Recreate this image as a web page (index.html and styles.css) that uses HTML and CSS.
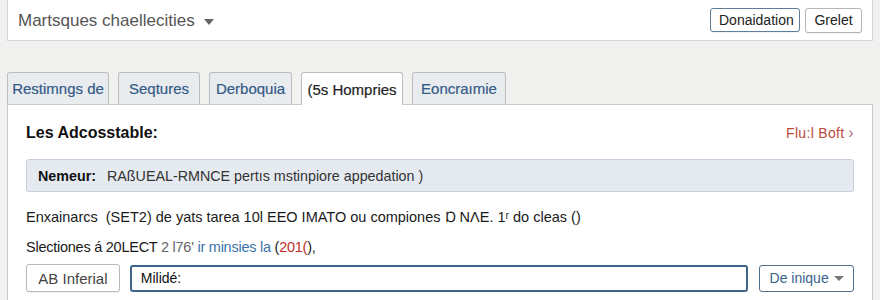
FILE: index.html
```html
<!DOCTYPE html>
<html>
<head>
<meta charset="utf-8">
<link rel="stylesheet" href="styles.css">
</head>
<body>
<div class="page">
  <header class="topbar">
    <div class="title">Martsques chaellecities <span class="caret"></span></div>
    <div class="actions">
      <button class="btn btn-primary">Donaidation</button>
      <button class="btn">Grelet</button>
    </div>
  </header>

  <nav class="tabs">
    <div class="tab">Restimngs de</div>
    <div class="tab">Seqtures</div>
    <div class="tab">Derboquia</div>
    <div class="tab active">(5s Hompries</div>
    <div class="tab">Eoncraımie</div>
  </nav>

  <section class="panel">
    <div class="panel-head">
      <h2 class="panel-title">Les Adcosstable:</h2>
      <a class="panel-link">Flu:l Boft <span class="chev">›</span></a>
    </div>
    <div class="info">
      <b>Nemeur:</b><span class="info-text">RAßUEAL-RMNCE pertıs mstinpiore appedation )</span>
    </div>
    <p class="line1">Enxainarcs &nbsp;(SET2) de yats tarea 10l EEO IMATO ou compiones Ɒ NɅE. 1ʳ do cleas ()</p>
    <p class="line2">Slectiones á 20LECT <span class="muted">2 l76'</span> <span class="blue">ir minsies la</span> (<span class="red">201(</span>),</p>
    <div class="form-row">
      <button class="btn btn-form">AB Inferial</button>
      <div class="input">Milidé:</div>
      <div class="select">De inique <span class="caret small"></span></div>
    </div>
  </section>
</div>
</body>
</html>
```

FILE: styles.css
```css
* { box-sizing: border-box; }
html, body {
  margin: 0;
  padding: 0;
  background: #f1f1f0;
  font-family: "Liberation Sans", Arial, sans-serif;
  color: #222;
  overflow: hidden;
}
.page {
  padding: 0 7px;
  width: 880px;
}
.topbar {
  height: 41px;
  background: #fff;
  border: 1px solid #d6d6d6;
  border-top: none;
  display: flex;
  align-items: center;
  justify-content: space-between;
  padding: 0 10px 0 10px;
}
.title {
  font-size: 17px;
  color: #555;
  display: flex;
  align-items: center;
  margin-top: 2px;
}
.caret {
  display: inline-block;
  width: 0;
  height: 0;
  border-left: 5px solid transparent;
  border-right: 5px solid transparent;
  border-top: 6px solid #666;
  margin-left: 9px;
  margin-top: 1px;
}
.caret.small {
  border-left-width: 5px;
  border-right-width: 5px;
  border-top-width: 5px;
  margin-left: 5px;
  border-top-color: #777;
}
.actions {
  display: flex;
  gap: 5px;
  align-items: center;
}
.btn {
  font-family: "Liberation Sans", Arial, sans-serif;
  font-size: 14px;
  color: #222;
  background: #fff;
  border: 1px solid #b5b5b5;
  border-radius: 3px;
  height: 25px;
  padding: 0 8px;
  box-shadow: 0 1px 1px rgba(0,0,0,0.06);
}
.btn-primary {
  border-color: #5f7e9c;
  width: 90px;
  height: 24px;
}
.actions .btn:last-child { width: 57px; }
.tabs {
  display: flex;
  gap: 9px;
  margin-top: 31px;
  height: 32px;
  align-items: flex-end;
  position: relative;
  z-index: 1;
}
.tab {
  height: 32px;
  background: #e8ecef;
  border: 1px solid #bdbdbd;
  border-bottom: none;
  border-radius: 3px 3px 0 0;
  font-size: 15px;
  color: #345a86;
  display: flex;
  align-items: center;
  justify-content: center;
  -webkit-text-stroke: 0.2px currentColor;
}
.tab:nth-child(1) { width: 102px; }
.tab:nth-child(2) { width: 82px; }
.tab:nth-child(3) { width: 83px; }
.tab:nth-child(4) { width: 102px; }
.tab:nth-child(5) { width: 94px; }
.tab.active {
  background: #fff;
  color: #222;
  height: 33px;
  margin-bottom: -1px;
}
.panel {
  background: #fff;
  border: 1px solid #c9c9c9;
  border-bottom: none;
  padding: 0 18px 10px 18px;
  height: 200px;
}
.panel-head {
  display: flex;
  justify-content: space-between;
  align-items: center;
  height: 54px;
  padding-top: 2px;
}
.panel-title {
  margin: 0;
  font-size: 16px;
  font-weight: bold;
  color: #111;
}
.panel-link {
  font-size: 14px;
  color: #b94a3c;
  letter-spacing: 0.3px;
  display: flex;
  align-items: center;
}
.chev {
  font-size: 16px;
  margin-left: 4px;
  color: #a77;
}
.info {
  height: 33px;
  background: #e5eaf1;
  border: 1px solid #c7d1dd;
  border-radius: 3px;
  display: flex;
  align-items: center;
  padding-left: 11px;
  font-size: 14.3px;
  color: #222;
}
.info b { color: #111; }
.info-text {
  margin-left: 11px;
  color: #333;
}
.line1, .line2 {
  margin: 0;
  font-size: 14.5px;
  color: #1a1a1a;
}
.line1 { margin-top: 14px; }
.line2 { margin-top: 13px; letter-spacing: -0.25px; }
.muted { color: #666; }
.blue { color: #3a74a8; }
.red { color: #c0302a; }
.form-row {
  display: flex;
  align-items: center;
  margin-top: 9px;
  gap: 10px;
}
.btn-form {
  width: 94px;
  height: 28px;
  font-size: 15px;
  color: #444;
  border-color: #b8b8b8;
}
.input {
  width: 620px;
  height: 27px;
  border: 2px solid #3e6489;
  border-radius: 3px;
  font-size: 14px;
  color: #111;
  display: flex;
  align-items: center;
  padding-left: 9px;
}
.select {
  width: 95px;
  height: 27px;
  border: 1px solid #4f6f8f;
  border-radius: 3px;
  font-size: 14px;
  color: #3a5f8a;
  display: flex;
  align-items: center;
  justify-content: center;
  margin-left: 1px;
}
```
